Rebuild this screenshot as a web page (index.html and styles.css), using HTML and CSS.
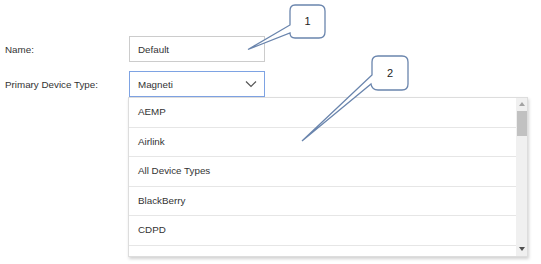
FILE: index.html
```html
<!DOCTYPE html>
<html lang="en">
<head>
  <meta charset="UTF-8" />
  <title>Device Profile</title>
  <link rel="stylesheet" href="styles.css">
</head>
<body>

  <!-- Formulario -->
  <div class="form">
    <div class="row">
      <label class="label">Name:</label>
      <div class="input">Default</div>
    </div>
    <div class="row">
      <label class="label">Primary Device Type:</label>
      <div class="select-wrap">
        <div class="select">
          <span>Magneti</span>
          <svg class="chevron" width="12" height="8" viewBox="0 0 12 8"><path d="M1 1.5 L6 6.5 L11 1.5" fill="none" stroke="#555" stroke-width="1.2"/></svg>
        </div>

        <!-- Lista desplegable -->
        <div class="dropdown">
          <ul class="options">
            <li>AEMP</li>
            <li>Airlink</li>
            <li>All Device Types</li>
            <li>BlackBerry</li>
            <li>CDPD</li>
            <li></li>
          </ul>
          <div class="scrollbar">
            <span class="arrow up"></span>
            <span class="thumb"></span>
            <span class="arrow down"></span>
          </div>
        </div>
      </div>
    </div>
  </div>

  <!-- Llamadas -->
  <svg class="callouts" width="541" height="264" viewBox="0 0 541 264">
    <path d="M295 5 H319 Q325 5 325 11 V32 Q325 38 319 38 H295 Q290 38 290 33 L248 49.5 L290 25 V11 Q290 5 295 5 Z" fill="#fff" stroke="#6a85ad" stroke-width="1.3"/>
    <text x="307.5" y="25" class="num">1</text>
    <path d="M378 56 H402 Q408 56 408 62 V84 Q408 90 402 90 H378 Q372 90 371 84 L302 141 L372 75 V62 Q372 56 378 56 Z" fill="#fff" stroke="#6a85ad" stroke-width="1.3"/>
    <text x="390" y="77" class="num">2</text>
  </svg>

</body>
</html>
```

FILE: styles.css
```css
body {
  margin: 0;
  font-family: "Liberation Sans", Arial, sans-serif;
  font-size: 9.8px;
  color: #333;
  background-color: #fff;
  width: 541px;
  height: 264px;
  position: relative;
  overflow: hidden;
}

.form {
  padding-top: 36px;
  display: flex;
  flex-direction: column;
  gap: 9px;
}

.row {
  display: flex;
  align-items: center;
}

.label {
  width: 124px;
  padding-left: 5px;
}

.input, .select {
  width: 122px;
  height: 24px;
  padding: 0 4px 0 8px;
  display: flex;
  align-items: center;
  justify-content: space-between;
  background-color: #fff;
}

.input {
  border: 1px solid #ccc;
}

.select {
  border: 1px solid #7ea3e3;
}

.chevron {
  margin-right: 3px;
}

.select-wrap {
  position: relative;
}

.dropdown {
  position: absolute;
  top: 26px;
  left: -1px;
  width: 398px;
  height: 158px;
  border: 1px solid #ddd;
  background-color: #fff;
  box-shadow: 1px 2px 3px rgba(0,0,0,0.18);
  display: flex;
  overflow: hidden;
}

.options {
  flex: 1;
  list-style: none;
  margin: 0;
  padding: 0;
}

.options li {
  height: 28.6px;
  line-height: 28.6px;
  padding-left: 9px;
  border-bottom: 1px solid #e6e6e6;
}

.scrollbar {
  width: 11px;
  background-color: #f0f0f0;
  position: relative;
}

.thumb {
  position: absolute;
  top: 13px;
  left: 1px;
  width: 10px;
  height: 25px;
  background-color: #c1c1c1;
}

.arrow {
  position: absolute;
  left: 3px;
  width: 0;
  height: 0;
  border-left: 3px solid transparent;
  border-right: 3px solid transparent;
}

.arrow.up {
  top: 4px;
  border-bottom: 4px solid #a3a3a3;
}

.arrow.down {
  bottom: 5px;
  border-top: 4px solid #505050;
}

.callouts {
  position: absolute;
  top: 0;
  left: 0;
}

.num {
  font-family: "Liberation Sans", Arial, sans-serif;
  font-size: 11px;
  fill: #222;
  text-anchor: middle;
}
```
